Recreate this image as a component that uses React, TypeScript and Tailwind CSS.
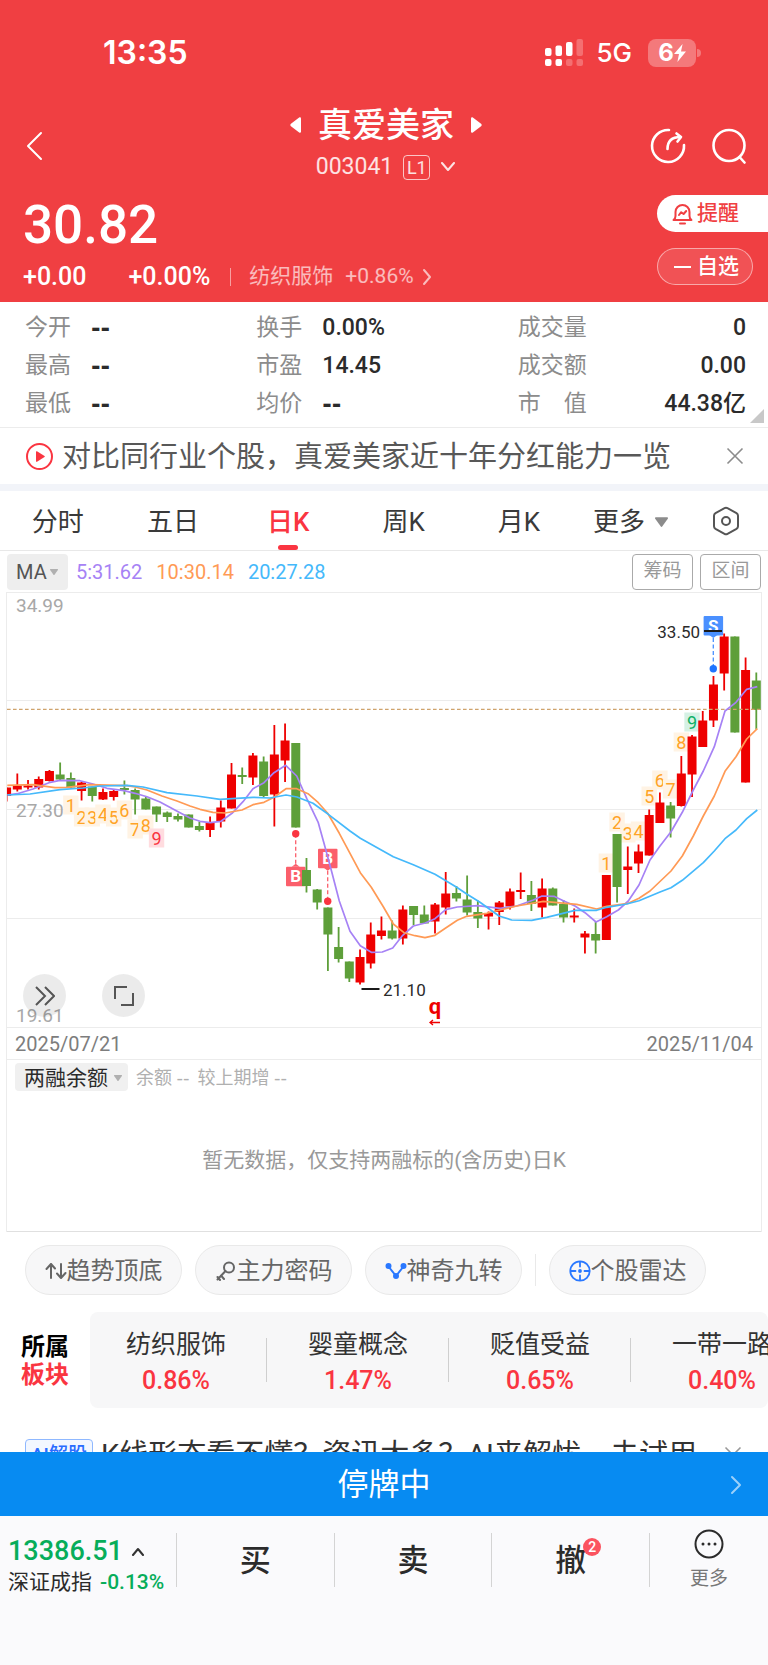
import { useState } from "react";

type Candle = [up: 0 | 1, top: number, bottom: number, high: number, low: number];

// body top / bottom and wick high / low in chart units, 1 = red (up)
const candles: Candle[] = [
  [1, 195.5, 204, 195.5, 209.5], [1, 193.5, 197.5, 181.5, 199.5], [1, 193.5, 195.5, 188, 197.5],
  [1, 187, 195.5, 184.5, 197.5], [1, 179, 189, 178, 189.5], [0, 182.5, 187.5, 170.5, 188],
  [0, 186, 195.5, 180.5, 196.5], [1, 190.5, 199, 189.5, 208.5], [0, 194.5, 204, 194.5, 209.5],
  [1, 200, 207.5, 196.5, 208], [1, 199, 205, 197.5, 208.5], [0, 196, 198, 188.5, 202.5],
  [0, 198, 207.5, 196.5, 222.5], [0, 206.5, 217.5, 204.5, 217.5], [0, 214.5, 222.5, 214.5, 230],
  [0, 220.5, 225, 219.5, 230], [0, 224, 227.5, 221.5, 229.5], [0, 222.5, 235.5, 222.5, 235.5],
  [0, 234, 238, 229.5, 239.5], [1, 230.5, 238, 224.5, 245], [1, 215.5, 229.5, 208.5, 235.5],
  [1, 182.5, 216.5, 171, 216.5], [0, 183, 185, 175.5, 192], [1, 163.5, 185.5, 161, 193],
  [0, 169.5, 204, 164.5, 205.5], [1, 162.5, 202.5, 133, 234.5], [1, 148.5, 168.5, 131.5, 190],
  [0, 151, 235.5, 151, 235.5], [0, 278, 294, 266, 300.5], [0, 297.5, 310.5, 297, 317.5],
  [0, 315.5, 342.5, 315.5, 379], [0, 355, 367, 335, 370.5], [0, 369.5, 386.5, 369.5, 390],
  [1, 365, 390.5, 357.5, 392.5], [1, 342.5, 371.5, 330.5, 376.5], [1, 338.5, 344, 324.5, 347.5],
  [0, 338.5, 346.5, 328.5, 347.5], [1, 317.5, 346.5, 313.5, 352.5], [0, 314, 323, 314, 333],
  [0, 322.5, 331.5, 313.5, 332], [1, 312.5, 329.5, 311, 341.5], [1, 301.5, 315.5, 280, 322.5],
  [0, 301, 306.5, 294, 309.5], [0, 307.5, 320.5, 283.5, 323.5], [0, 320, 326.5, 308.5, 336],
  [1, 321, 324.5, 319.5, 337.5], [1, 310.5, 320, 309, 333], [1, 299.5, 314.5, 296.5, 317.5],
  [1, 298, 300, 280.5, 307], [0, 303, 312, 289, 319], [1, 296.5, 315.5, 286.5, 325.5],
  [0, 296.5, 313.5, 295.5, 313.5], [0, 312, 325.5, 308, 330.5], [1, 323.5, 325.5, 316.5, 330.5],
  [1, 341.5, 345.5, 339, 361.5], [0, 342, 348.5, 329.5, 361.5], [1, 283, 348, 283, 348],
  [0, 242, 295, 242, 310.5], [1, 274.5, 278, 254.5, 302], [1, 259.5, 271.5, 252.5, 281],
  [1, 223, 263.5, 217.5, 263.5], [1, 210.5, 231, 200.5, 231], [0, 213.5, 226.5, 210, 245.5],
  [1, 181.5, 214, 164, 214.5], [1, 144.5, 182.5, 143, 205], [1, 128.5, 155, 119, 155],
  [1, 92.5, 128.5, 84, 135], [1, 44.5, 81.5, 41.5, 98.5], [0, 44.5, 140.5, 44.5, 140.5],
  [1, 78, 190.5, 65.5, 190.5], [0, 88.5, 118, 80.5, 137.5],
];

const ma5 = "7.3,203 17.3,201.7 33,197 49,190.7 60,188.3 80,188.7 93,192 107,196.3 124,198.7 135,201.3 147,204.7 160,210 180,220.7 190,226 200,229.3 210,230.7 221,229.3 232,221.3 243,209.7 253,196.7 264,190.7 274,180.7 285.7,173.3 296.7,184 306.7,206.3 318.3,230.7 324,251.3 331.7,279.7 339.3,309 350,339.3 360.3,353.7 371.3,360.3 382.3,360 392.7,356 402.7,343.3 413.3,334 425.3,331 435,326.7 445.7,317.7 457.3,315 477.7,313.7 500,316.3 516.7,314 533.3,308 542,304 554,304.3 563.3,308.7 575,314 585,320.7 596,330 606.7,324.7 618.3,318 628.3,309 639,293 650,268 660,254 671,239.7 682.3,220.3 693.3,198 703.3,179 714.3,154.7 725,119 736,110.3 746.7,97.3 757.3,94.7";
const ma10 = "7.3,193.3 33,192.7 55,195.7 67,195.3 90,192.7 127,193.7 135,195 147,198 162,204 177,209 190,214 200,217.3 213,220.3 225,221 242,218 253,212.7 264,210.3 274,205.3 286,196.7 296.7,196.7 308,201.7 318.3,210.7 327.7,221.3 339.3,241.3 360.3,280.7 371.3,295.3 383.3,314.7 393.3,332 404,340.7 415,343.7 425,345.7 435,343.3 445.7,336 457.3,328.3 466.7,324.3 486.7,321.3 500,318 516.7,314 543.3,309.3 576.7,312.3 596.7,317 606.7,314.3 628.3,311.3 639,306.3 650,299 671,279 682.3,264 693.3,244 703.3,224 714.3,204 725,179.3 736,164.7 746.7,147 757.3,136.7";
const ma20 = "7.3,203 30,202 60,197.7 83,196 100,194 127,193.3 143,195 167,200.7 197,204 220,207.3 253,205.3 270,206 286,203 297,205 313,211.3 328.3,222.3 350,239 360.3,246.3 393.3,264.7 413.3,272.7 435,282.3 456.7,295.3 466.7,302 480,310.3 499,324 511.7,328 531.7,328.3 546.7,325.3 575,318.3 596.7,318.3 606.7,315.3 626.7,312 639,308.7 660,300 671,295.7 682.3,288.3 703.3,270.7 714.3,259 725,246.7 736,238 746.7,226.7 757.3,218";

// nine-turn counters: candle index, label, centre y
const downTurns: [number, number, number][] = [[6, 1, 213], [7, 2, 225], [8, 3, 225], [9, 4, 222], [10, 5, 225], [11, 6, 218], [12, 7, 237], [13, 8, 233], [14, 9, 246]];
const upTurns: [number, number, number][] = [[56, 1, 271], [57, 2, 230], [58, 3, 241], [59, 4, 239], [60, 5, 204], [61, 6, 188], [62, 7, 197], [63, 8, 150], [64, 9, 130]];

const cx = (i: number) => 6.6 + i * 10.71;

const stats = [
  [["今开", "--"], ["最高", "--"], ["最低", "--"]],
  [["换手", "0.00%"], ["市盈", "14.45"], ["均价", "--"]],
  [["成交量", "0"], ["成交额", "0.00"], ["市　值", "44.38亿"]],
];

const tabs = ["分时", "五日", "日K", "周K", "月K"];

const sectors = [
  { name: "纺织服饰", pct: "0.86%" },
  { name: "婴童概念", pct: "1.47%" },
  { name: "贬值受益", pct: "0.65%" },
  { name: "一带一路", pct: "0.40%" },
];

function Chevron({ d, w, h, className = "" }: { d: string; w: number; h: number; className?: string }) {
  return (
    <svg width={w} height={h} viewBox={`0 0 ${w} ${h}`} fill="none" stroke="currentColor" strokeWidth="2" strokeLinecap="round" strokeLinejoin="round" className={className} aria-hidden="true">
      <path d={d} />
    </svg>
  );
}

function Caret({ className = "" }: { className?: string }) {
  return (
    <svg viewBox="0 0 12 9" fill="currentColor" className={className} aria-hidden="true">
      <path d="M1 0h10a1 1 0 0 1 .8 1.5l-5 7a1 1 0 0 1-1.6 0l-5-7A1 1 0 0 1 1 0z" />
    </svg>
  );
}

function StatusBar() {
  return (
    <div className="flex h-[104px] items-center pt-[2px] pr-[67px] pl-[103px] font-['Inter',sans-serif]">
      <span className="text-[32px] leading-10 font-semibold">13:35</span>
      <svg width="40" height="28" viewBox="0 0 40 28" fill="currentColor" className="ml-auto" aria-hidden="true">
        <rect x="1" y="9" width="6.500" height="8" rx="2" />
        <rect x="11.500" y="6.500" width="6.500" height="10.500" rx="2" />
        <rect x="22" y="3" width="6.500" height="14" rx="2" />
        <rect x="32.500" y="0" width="6.500" height="17" rx="2" opacity=".25" />
        <rect x="1" y="20" width="6.500" height="7" rx="2" />
        <rect x="11.500" y="20" width="6.500" height="7" rx="2" />
        <rect x="22" y="20" width="6.500" height="7" rx="2" opacity=".25" />
        <rect x="32.500" y="20" width="6.500" height="7" rx="2" opacity=".25" />
      </svg>
      <span className="ml-3 text-[26px] leading-8 font-medium">5G</span>
      <div className="ml-4 flex h-7 w-12 items-center justify-center rounded-lg bg-white/30 text-[24px] font-bold">
        6
        <svg width="12" height="18" viewBox="0 0 12 18" fill="currentColor" aria-hidden="true">
          <path d="M8.600 0 0 10h5L3.400 18 12 7.500H7z" />
        </svg>
      </div>
      <span className="ml-px h-2 w-1 rounded-r-full bg-white/30" />
    </div>
  );
}

function Header() {
  return (
    <header className="bg-[#f03f42] text-white">
      <StatusBar />
      <div className="flex h-[84px] items-center justify-between pr-[21px] pl-[25px]">
        <button type="button" aria-label="返回" className="flex w-24 items-center">
          <Chevron w={18} h={30} d="M16 2 3 15l13 13" />
        </button>
        <div className="flex flex-col items-center">
          <div className="flex h-[42px] items-center gap-[17px]">
            <button type="button" aria-label="上一只">
              <svg width="11" height="16" viewBox="0 0 11 16" fill="currentColor" aria-hidden="true"><path d="M9.500.3Q11 0 11 1.500v13Q11 16 9.500 15.700L.6 9Q0 8 .6 7z" /></svg>
            </button>
            <h1 className="text-[34px] leading-[42px] font-medium">真爱美家</h1>
            <button type="button" aria-label="下一只">
              <svg width="11" height="16" viewBox="0 0 11 16" fill="currentColor" aria-hidden="true"><path d="M1.500.3Q0 0 0 1.500v13Q0 16 1.500 15.700L10.400 9q.6-1 0-2z" /></svg>
            </button>
          </div>
          <div className="flex h-[42px] items-center gap-[10px] text-white/85">
            <span className="text-[23px] leading-7">003041</span>
            <span className="flex h-[25px] w-[27px] items-center justify-center rounded border border-white/70 text-[18px]">L1</span>
            <Chevron w={16} h={10} d="m2 1 6 7 6-7" />
          </div>
        </div>
        <div className="flex w-24 items-center justify-end gap-[25px]">
          <button type="button" aria-label="分享">
            <svg width="36" height="36" viewBox="0 0 36 36" fill="none" stroke="currentColor" strokeWidth="2.600" strokeLinecap="round" strokeLinejoin="round" aria-hidden="true">
              <path d="M19 2a16 16 0 1 0 15 15" />
              <path d="M17.500 21c0-8 4-12 13-12" />
              <path d="M26.500 5.500 31 9l-3.500 4.500" />
            </svg>
          </button>
          <button type="button" aria-label="搜索">
            <svg width="36" height="36" viewBox="0 0 36 36" fill="none" stroke="currentColor" strokeWidth="2.600" strokeLinecap="round" aria-hidden="true">
              <circle cx="18" cy="17.500" r="15.500" />
              <path d="m28.500 29 5 5.500" />
            </svg>
          </button>
        </div>
      </div>
      <div className="flex justify-between pb-[10px] pl-[23px]">
        <div>
          <div className="flex h-[74px] items-center text-[53px] leading-[74px] font-medium">30.82</div>
          <div className="flex h-[30px] items-center text-[25px] font-medium">
            <span>+0.00</span>
            <span className="ml-[42px]">+0.00%</span>
            <span className="ml-5 h-[18px] w-px bg-white/50" />
            <a href="#sector" className="ml-[18px] flex items-center text-[21px] font-normal text-white/65">
              纺织服饰
              <span className="ml-3">+0.86%</span>
              <Chevron w={10} h={18} d="m2 2 6 7-6 7" className="ml-2" />
            </a>
          </div>
        </div>
        <div className="flex w-[111px] flex-col gap-4 pt-[7px] text-[21px] font-medium">
          <button type="button" className="flex h-[37px] items-center gap-1 rounded-l-full bg-white pl-[15px] text-[#f03f42]">
            <svg width="21" height="22" viewBox="0 0 21 22" fill="none" stroke="currentColor" strokeWidth="2" strokeLinecap="round" strokeLinejoin="round" aria-hidden="true">
              <path d="M1.500 17c1.500-1 2-2 2-4V9a7 7 0 0 1 14 0v4c0 2 .5 3 2 4z" />
              <path d="M8 20.500h5" />
              <path d="m7 12 2.200-2.800 2.400 1.800 2.600-3" />
            </svg>
            提醒
          </button>
          <button type="button" className="flex h-[37px] w-24 items-center gap-[6px] rounded-full border border-white/50 bg-white/10 pl-4">
            <span className="h-[2px] w-[17px] bg-white" />
            自选
          </button>
        </div>
      </div>
    </header>
  );
}

function Stats() {
  return (
    <section className="relative grid grid-cols-[231fr_261fr_228fr] border-b border-[#ececec] pt-[7px] pr-[22px] pb-1 pl-[25px] text-[23px]">
      {stats.map((col, c) => (
        <dl key={c}>
          {col.map(([label, value]) => (
            <div key={label} className={"flex h-[38px] items-center " + (c === 2 ? "justify-between" : "gap-5")}>
              <dt className="text-[#8c8c8c]">{label}</dt>
              <dd className={value === "--" ? "font-['DejaVu_Sans',sans-serif] font-bold text-[#2b2b2b]" : "font-medium text-[#2b2b2b]"}>{value}</dd>
            </div>
          ))}
        </dl>
      ))}
      <svg width="14" height="14" viewBox="0 0 14 14" className="absolute right-1 bottom-1 text-[#c8c8c8]" fill="currentColor" aria-hidden="true"><path d="M14 0v14H0z" /></svg>
    </section>
  );
}

function News() {
  return (
    <div className="flex h-14 items-center pr-6 pl-[25px] text-[#585858]">
      <svg width="29" height="29" viewBox="0 0 29 29" className="shrink-0 text-[#fa3541]" aria-hidden="true">
        <circle cx="14.500" cy="14.500" r="12.500" fill="none" stroke="currentColor" strokeWidth="2" />
        <path d="M11 9.800v9.400q0 1 1 .5l7.500-4.600q.7-.6 0-1.200L12 9.300q-1-.5-1 .5z" fill="currentColor" />
      </svg>
      <a href="#news" className="ml-2 grow pt-[2px] text-[29px] leading-10 whitespace-nowrap">对比同行业个股，真爱美家近十年分红能力一览</a>
      <button type="button" aria-label="关闭" className="text-[#8c8c8c]">
        <svg width="18" height="18" viewBox="0 0 18 18" stroke="currentColor" strokeWidth="1.600" aria-hidden="true"><path d="m1.500 1.500 15 15m0-15-15 15" /></svg>
      </button>
    </div>
  );
}

function Tabs() {
  const [active, setActive] = useState("日K");
  return (
    <nav className="flex h-[60px] items-center border-b border-[#e8e8e8] text-[26px] text-[#3a3a3a]">
      {tabs.map((t) => (
        <button
          key={t}
          type="button"
          onClick={() => setActive(t)}
          className={"relative h-full flex-[115] pt-[3px] " + (t === active ? "font-medium text-[#fa3541]" : "")}
        >
          {t}
          {t === active && <span className="absolute bottom-0 left-1/2 h-[5px] w-5 -translate-x-1/2 rounded-full bg-[#fa3541]" />}
        </button>
      ))}
      <button type="button" aria-haspopup="menu" className="flex h-full flex-[108] items-center justify-center gap-[10px] pt-[3px]">
        更多
        <Caret className="h-[10px] w-[13px] text-[#8c8c8c]" />
      </button>
      <button type="button" aria-label="设置" className="flex h-full flex-[83] items-center justify-center text-[#555]">
        <svg width="28" height="30" viewBox="0 0 28 30" fill="none" stroke="currentColor" strokeWidth="2" strokeLinejoin="round" aria-hidden="true">
          <path d="M12.500 2.200q1.500-.9 3 0l9 5q1.500.9 1.500 2.600v10.400q0 1.700-1.500 2.600l-9 5q-1.500.9-3 0l-9-5Q2 21.900 2 20.200V9.800q0-1.700 1.500-2.600z" />
          <circle cx="14" cy="15" r="4" />
        </svg>
      </button>
    </nav>
  );
}

function Turn({ i, n, y, nine, boxColor }: { i: number; n: number; y: number; nine: string; boxColor: string }) {
  return (
    <g>
      <rect x={cx(i) - 7.7} y={y - 9.500} width="15.400" height="19" fill={n === 9 ? boxColor : "#fff3e4"} />
      <text x={cx(i)} y={y + 6.500} textAnchor="middle" fontSize="18" fill={n === 9 ? nine : "#ffa326"}>{n}</text>
    </g>
  );
}

function Trade({ x, boxY, dotY, label, color, dot }: { x: number; boxY: number; dotY: number; label: string; color: string; dot: string }) {
  const below = boxY > dotY;
  const edge = below ? boxY : boxY + 19;
  const tip = below ? edge - 3 : edge + 3;
  return (
    <g>
      <line x1={x} x2={x} y1={tip} y2={dotY} stroke={color} strokeWidth="1.300" strokeDasharray="4 2.500" />
      <rect x={x - 9.700} y={boxY} width="19.500" height="19.500" rx="1" fill={color} />
      <path d={`M${x - 4} ${edge}L${x} ${tip}L${x + 4} ${edge}z`} fill={color} />
      <text x={x} y={boxY + 15.500} textAnchor="middle" fontSize="17" fontWeight="700" fill="#fff">{label}</text>
      <circle cx={x} cy={dotY} r="3.700" fill={dot} />
    </g>
  );
}

function KChart() {
  return (
    <div className="relative">
      <svg viewBox="7 0 754 436" className="block h-auto w-full" role="img" aria-label="日K线图">
        {[0.5, 108.5, 217.5, 326.5, 435.5].map((y) => (
          <line key={y} x1="0" x2="768" y1={y} y2={y} stroke="#ececec" />
        ))}
        <g fontSize="19" fill="#a8a8a8">
          <text x="16" y="20">34.99</text>
          <text x="16" y="225">27.30</text>
          <text x="16" y="430">19.61</text>
        </g>
        {downTurns.map(([i, n, y]) => <Turn key={i} i={i} n={n} y={y} nine="#fa3541" boxColor="#ffdcdf" />)}
        {upTurns.map(([i, n, y]) => <Turn key={i} i={i} n={n} y={y} nine="#10b066" boxColor="#d5f1e4" />)}
        <Trade x={295.7} boxY={274.7} dotY={241.7} label="B" color="#fb5f6b" dot="#fa3541" />
        <Trade x={327.7} boxY={256.7} dotY={309.3} label="B" color="#fb5f6b" dot="#fa3541" />
        <Trade x={713.3} boxY={24} dotY={76.7} label="S" color="#4a90ff" dot="#1f74ff" />
        {candles.map(([up, top, bottom, high, low], i) => (
          <g key={i} fill={up ? "#ee0000" : "#5e9f3a"}>
            <rect x={cx(i) - 4.5} y={top} width="9" height={bottom - top} />
            <rect x={cx(i) - 0.9} y={high} width="1.800" height={low - high} />
          </g>
        ))}
        <line x1="7" x2="761" y1="117.300" y2="117.300" stroke="#cfa36c" strokeWidth="1.300" strokeDasharray="3.600 2.400" />
        <g fill="none" strokeWidth="1.700" strokeLinejoin="round">
          <polyline points={ma5} stroke="#a682f5" />
          <polyline points={ma10} stroke="#ff9a55" />
          <polyline points={ma20} stroke="#45b9fb" />
        </g>
        <g fontSize="17" fill="#2b2b2b">
          <text x="700" y="46" textAnchor="end">33.50</text>
          <text x="383" y="404">21.10</text>
        </g>
        <path d="M704 39h18M361.500 397h18" stroke="#1a1a1a" strokeWidth="1.800" />
        <text x="435" y="422" textAnchor="middle" fontSize="22" fontWeight="700" fill="#ee0000">q</text>
        <path d="M440 430.500h-10m3-2.500-3 2.500 3 2.500" fill="none" stroke="#ee0000" strokeWidth="1.300" />
      </svg>
      <div className="absolute bottom-[11px] left-4 flex gap-9 text-[#555]">
        <button type="button" aria-label="展开" className="flex size-[43px] items-center justify-center rounded-full bg-black/8">
          <svg width="20" height="20" viewBox="0 0 20 20" fill="none" stroke="currentColor" strokeWidth="2" aria-hidden="true"><path d="m1 1 9 9-9 9M10 1l9 9-9 9" /></svg>
        </button>
        <button type="button" aria-label="全屏" className="flex size-[43px] items-center justify-center rounded-full bg-black/8">
          <svg width="20" height="20" viewBox="0 0 20 20" fill="none" stroke="currentColor" strokeWidth="2" aria-hidden="true"><path d="M1 13V1h12M19 7v12H7" /></svg>
        </button>
      </div>
    </div>
  );
}

function ChartSection() {
  return (
    <section>
      <div className="flex h-[41px] items-center px-[7px] text-[20px]">
        <div className="relative h-9 w-[61px] rounded bg-[#eeeeee] text-[#555]">
          <select aria-label="指标" className="h-full w-full appearance-none pl-[9px]">
            <option>MA</option>
          </select>
          <Caret className="pointer-events-none absolute top-[15px] right-[10px] h-[6px] w-2 text-[#b0b0b0]" />
        </div>
        <span className="ml-2 text-[#a682f5]">5:31.62</span>
        <span className="ml-[14px] text-[#ff9a55]">10:30.14</span>
        <span className="ml-[14px] text-[#45b9fb]">20:27.28</span>
        <div className="ml-auto flex gap-[7px] text-[19px] text-[#999]">
          <button type="button" className="h-9 w-[61px] rounded border border-[#aaa]">筹码</button>
          <button type="button" className="h-9 w-[61px] rounded border border-[#aaa]">区间</button>
        </div>
      </div>
      <div className="mx-[6px] border-x border-[#ececec]">
        <KChart />
        <div className="flex h-8 items-center justify-between border-b border-[#ececec] px-2 text-[20px] text-[#7d7d7d]">
          <time>2025/07/21</time>
          <time>2025/11/04</time>
        </div>
        <div className="flex h-[172px] flex-col border-b border-[#e0e0e0] pt-[3px]">
          <div className="flex items-center pl-2">
            <div className="relative h-7 w-[113px] rounded bg-[#f0f0f0] text-[21px] text-[#2b2b2b]">
              <select aria-label="副图指标" className="h-full w-full appearance-none pl-[9px] leading-7">
                <option>两融余额</option>
              </select>
              <Caret className="pointer-events-none absolute top-3 right-[6px] h-[6px] w-2 text-[#b0b0b0]" />
            </div>
            <span className="ml-2 flex gap-2 text-[18px] text-[#b0b0b0]">
              <span>余额 <span className="font-['DejaVu_Sans',sans-serif]">--</span></span>
              <span>较上期增 <span className="font-['DejaVu_Sans',sans-serif]">--</span></span>
            </span>
          </div>
          <p className="flex grow items-center justify-center text-[21px] text-[#999]">暂无数据，仅支持两融标的(含历史)日K</p>
        </div>
      </div>
    </section>
  );
}

function Tools() {
  const pill = "flex h-[50px] w-[157px] shrink-0 items-center justify-center rounded-full border border-[#e9e9e9] bg-[#f7f7f8] pt-px";
  return (
    <div className="flex items-center gap-[13px] pt-[13px] pb-[17px] pl-[25px] text-[24px] whitespace-nowrap text-[#666]">
      <button type="button" className={pill}>
        <svg width="22" height="20" viewBox="0 0 22 20" fill="none" stroke="currentColor" strokeWidth="2" strokeLinecap="round" strokeLinejoin="round" aria-hidden="true">
          <path d="M6 17V3L1.500 8M6 3l4 4.500M16 3v14l4.500-5M16 17l-4-4.500" />
        </svg>
        趋势顶底
      </button>
      <button type="button" className={pill}>
        <svg width="22" height="22" viewBox="0 0 22 22" fill="none" stroke="currentColor" strokeWidth="2" strokeLinecap="round" strokeLinejoin="round" aria-hidden="true">
          <circle cx="14" cy="7.500" r="5" />
          <path d="M10.500 11 2.500 19.500M6 15.500l3 3.500M2.500 17l2.500 3" />
        </svg>
        主力密码
      </button>
      <button type="button" className={pill}>
        <svg width="22" height="18" viewBox="0 0 22 18" fill="#2a78ff" stroke="#2a78ff" strokeWidth="2" aria-hidden="true">
          <path d="M3.500 4.500 11 14l7.500-9.500" fill="none" />
          <circle cx="3.500" cy="4" r="2" /><circle cx="18.500" cy="4" r="2" /><circle cx="11" cy="14" r="2" />
        </svg>
        神奇九转
      </button>
      <span className="h-8 w-px bg-[#e9e9e9]" />
      <button type="button" className={pill}>
        <svg width="22" height="22" viewBox="0 0 22 22" fill="none" stroke="#2a78ff" strokeWidth="1.800" strokeLinecap="round" aria-hidden="true">
          <circle cx="11" cy="11" r="9.700" />
          <path d="M11 2v4.500M11 15.500V20M2 11h4.500M15.500 11H20" />
          <circle cx="11" cy="11" r="1" fill="#2a78ff" />
        </svg>
        个股雷达
      </button>
    </div>
  );
}

function Sectors() {
  return (
    <section id="sector" className="flex h-24 items-center overflow-hidden">
      <h2 className="w-[90px] shrink-0 pt-[2px] pl-[21px] text-[24px] leading-7 font-bold text-black">
        所属
        <br />
        <span className="text-[#fa3541]">板块</span>
      </h2>
      <div className="h-full grow overflow-hidden rounded-lg bg-[#f7f7f8]">
        <div className="-ml-[5px] flex h-full items-center pt-[6px]">
          {sectors.map((s, i) => (
            <a key={s.name} href="#sector" className="relative flex w-[182px] shrink-0 flex-col items-center">
              <span className="text-[25px] leading-9 text-[#333]">{s.name}</span>
              <span className="text-[25px] leading-9 font-medium text-[#fa3541]">{s.pct}</span>
              {i < 3 && <span className="absolute top-[11px] right-0 h-11 w-px bg-[#cfcfcf]" />}
            </a>
          ))}
        </div>
      </div>
    </section>
  );
}

function AiTip() {
  return (
    <div className="mt-[23px] flex h-12 items-center pr-[26px] pl-[25px] text-[#333]">
      <span className="flex h-[33px] w-[68px] shrink-0 items-center justify-center rounded border border-[#8fb8ff] bg-[#f2f7ff] text-[19px] font-medium text-[#2a6cff]">AI解股</span>
      <a href="#ai" className="ml-2 grow text-[29px] leading-10 whitespace-nowrap">K线形态看不懂？资讯太多？AI来解忧，去试用</a>
      <button type="button" aria-label="关闭" className="text-[#999]">
        <svg width="18" height="18" viewBox="0 0 18 18" stroke="currentColor" strokeWidth="1.600" aria-hidden="true"><path d="m1.500 1.500 15 15m0-15-15 15" /></svg>
      </button>
    </div>
  );
}

function Footer() {
  return (
    <footer className="fixed inset-x-0 bottom-0 bg-[#fafafc]">
      <button type="button" className="relative flex h-16 w-full items-center justify-center bg-[#078bf2] pt-[2px] text-[31px] text-white">
        停牌中
        <Chevron w={12} h={20} d="m2 2 8 8-8 8" className="absolute right-[26px] text-white/60" />
      </button>
      <div className="flex h-[149px] items-start pt-[17px] text-[#2b2b2b]">
        <a href="#index" className="h-[54px] w-[177px] shrink-0 border-r border-[#d4d4d4] pt-px pl-2 whitespace-nowrap">
          <span className="flex h-[34px] items-center text-[27px] font-medium text-[#07ad5a]">
            13386.51
            <Chevron w={14} h={9} d="m2 8 5-6 5 6" className="ml-2 text-[#333]" />
          </span>
          <span className="flex h-[30px] items-center text-[21px]">
            深证成指
            <span className="ml-2 font-medium text-[#07ad5a]">-0.13%</span>
          </span>
        </a>
        <button type="button" className="h-[54px] grow basis-0 border-r border-[#d4d4d4] pt-[3px] text-[31px] font-medium">买</button>
        <button type="button" className="h-[54px] grow basis-0 border-r border-[#d4d4d4] pt-[3px] text-[31px] font-medium">卖</button>
        <button type="button" className="h-[54px] grow basis-0 border-r border-[#d4d4d4] pt-[3px] text-[31px] font-medium">
          <span className="relative">
            撤
            <span className="absolute -top-1 -right-[15px] flex size-[18px] items-center justify-center rounded-full bg-[#fb5360] text-[14px] leading-none text-white">2</span>
          </span>
        </button>
        <button type="button" className="-mt-1 flex w-[118px] shrink-0 flex-col items-center text-[19px] text-[#777]">
          <svg width="30" height="30" viewBox="0 0 30 30" fill="#2b2b2b" aria-hidden="true">
            <circle cx="15" cy="15" r="13.500" fill="none" stroke="#2b2b2b" strokeWidth="2" />
            <circle cx="9" cy="15" r="1.500" /><circle cx="15" cy="15" r="1.500" /><circle cx="21" cy="15" r="1.500" />
          </svg>
          <span className="mt-[6px] leading-7">更多</span>
        </button>
      </div>
    </footer>
  );
}

export default function App() {
  return (
    <div className="min-h-screen overflow-x-hidden bg-white font-['Roboto','Noto_Sans_CJK_SC',sans-serif]">
      <Header />
      <Stats />
      <News />
      <div className="h-[7px] bg-[#f2f4f9]" />
      <Tabs />
      <ChartSection />
      <Tools />
      <Sectors />
      <AiTip />
      <Footer />
    </div>
  );
}
